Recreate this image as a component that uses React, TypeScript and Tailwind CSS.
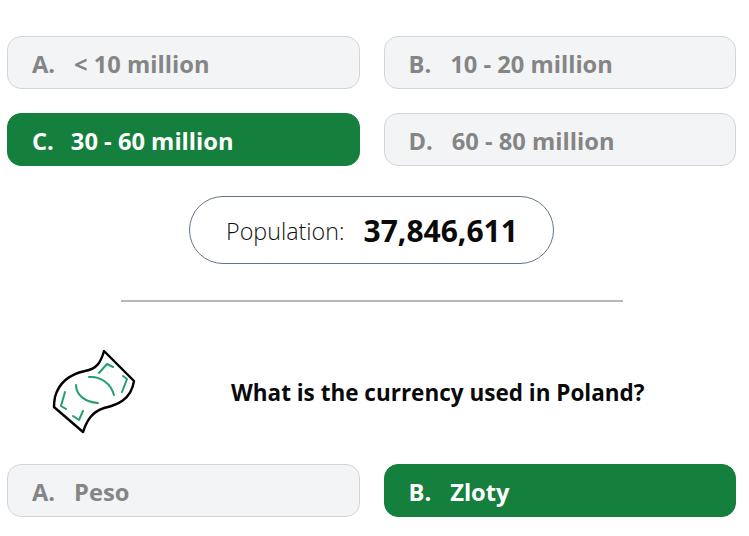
const font = "font-['Open_Sans','Noto_Sans',sans-serif]";

function Option({ letter, text, active = false, gap = "gap-[19px]" }: { letter: string; text: string; active?: boolean; gap?: string }) {
  return (
    <div
      className={`flex h-[53px] items-center ${gap} rounded-[14px] border pl-[24px] pt-[4px] text-[23.7px] font-bold ${
        active ? "border-[#15803d] bg-[#15803d] text-white" : "border-[#d1d5db] bg-[#f3f4f6] text-[#858585]"
      }`}
    >
      <span>{letter}</span>
      <span>{text}</span>
    </div>
  );
}

export default function App() {
  return (
    <div className={`flex h-[536px] w-[749px] flex-col overflow-hidden bg-white pl-[7px] pr-[13px] pt-[36px] ${font}`}>
      <div className="grid grid-cols-2 gap-x-[24px] gap-y-[24px]">
        <Option letter="A." text="< 10 million" />
        <Option letter="B." text="10 - 20 million" />
        <Option letter="C." text="30 - 60 million" active gap="gap-[17px]" />
        <Option letter="D." text="60 - 80 million" />
      </div>
      <div className="mt-[30px] flex justify-center">
        <div className="flex h-[68px] w-[365px] items-center gap-[19px] rounded-[34px] border border-[#64748b] pl-[36px]">
          <span className="pt-[2px] text-[23.3px] font-light text-[#111]">Population:</span>
          <span className="text-[30px] font-bold text-[#0a0a0a]">37,846,611</span>
        </div>
      </div>
      <div className="ml-[114px] mt-[36px] h-[2px] w-[502px] bg-[#b8b8b8]" />
      <div className="mt-[48px] flex h-[86px] items-center pl-[44px]">
        <svg viewBox="36 333 130 120" width="130" height="120" className="-my-[17px] -ml-[14px] shrink-0" fill="none" strokeLinecap="round" strokeLinejoin="round">
          <path d="M103 351 C100 362 96 369 84 371 C70 374 58 382 54 397 C53 402 53 405 53 407 L82 432 C86 420 91 412 103 408 C116 405 130 400 133 381 Z" stroke="#000" strokeWidth="2.4" />
          <g stroke="#22a06b" strokeWidth="2">
            <path d="M88 377 C100 376 110 384 113 395" />
            <path d="M75 385 C75 395 84 402 97 403" />
            <path d="M98 373 L106 364 L112 367" />
            <path d="M122 376 L126 379 L121 392" />
            <path d="M64 392 L60 406 L65 409" />
            <path d="M72 416 L78 420 L82 411" />
          </g>
        </svg>
        <div className="ml-[64px] text-[22.5px] font-bold text-[#0a0a0a]">What is the currency used in Poland?</div>
      </div>
      <div className="mt-[28px] grid grid-cols-2 gap-x-[24px]">
        <Option letter="A." text="Peso" />
        <Option letter="B." text="Zloty" active />
      </div>
    </div>
  );
}
